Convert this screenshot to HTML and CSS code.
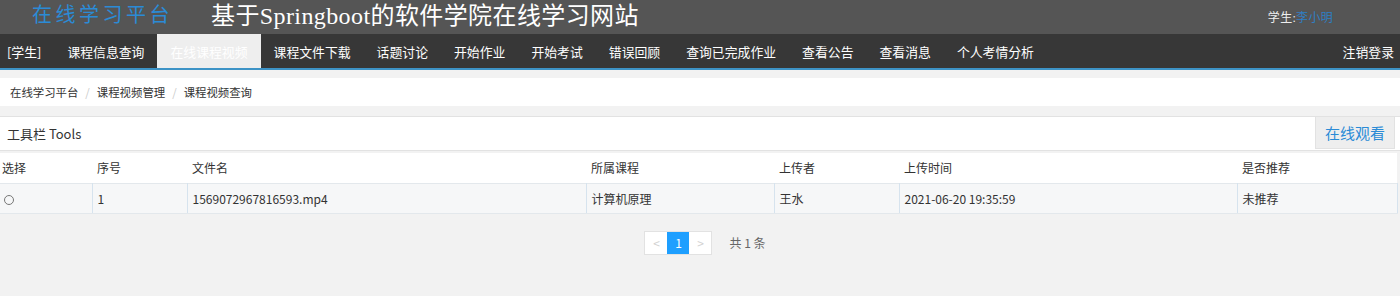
FILE: index.html
```html
<!DOCTYPE html>
<html lang="zh">
<head>
  <meta charset="UTF-8" />
  <title>在线课程视频 - 在线学习平台</title>
  <link rel="stylesheet" href="styles.css">
</head>
<body>
  <div class="header">
    <div class="logo">在线学习平台</div>
    <div class="site-title">基于Springboot的软件学院在线学习网站</div>
    <div class="user">学生:<span class="user-name">李小明</span></div>
  </div>

  <div class="nav">
    <span class="nav-role">[学生]</span>
    <a class="nav-item" href="#">课程信息查询</a>
    <a class="nav-item active" href="#">在线课程视频</a>
    <a class="nav-item" href="#">课程文件下载</a>
    <a class="nav-item" href="#">话题讨论</a>
    <a class="nav-item" href="#">开始作业</a>
    <a class="nav-item" href="#">开始考试</a>
    <a class="nav-item" href="#">错误回顾</a>
    <a class="nav-item" href="#">查询已完成作业</a>
    <a class="nav-item" href="#">查看公告</a>
    <a class="nav-item" href="#">查看消息</a>
    <a class="nav-item" href="#">个人考情分析</a>
    <a class="nav-item logout" href="#">注销登录</a>
  </div>

  <div class="breadcrumb">
    <span>在线学习平台</span><span class="sep">/</span>
    <span>课程视频管理</span><span class="sep">/</span>
    <span>课程视频查询</span>
  </div>

  <div class="toolbar">
    <span class="toolbar-title">工具栏 Tools</span>
    <button class="tool-btn">在线观看</button>
  </div>

  <table class="grid">
    <thead>
      <tr>
        <th class="c-sel">选择</th>
        <th class="c-no">序号</th>
        <th class="c-file">文件名</th>
        <th class="c-course">所属课程</th>
        <th class="c-user">上传者</th>
        <th class="c-time">上传时间</th>
        <th class="c-rec">是否推荐</th>
      </tr>
    </thead>
    <tbody>
      <tr>
        <td class="c-sel"><span class="radio"></span></td>
        <td>1</td>
        <td>1569072967816593.mp4</td>
        <td>计算机原理</td>
        <td>王水</td>
        <td>2021-06-20 19:35:59</td>
        <td>未推荐</td>
      </tr>
    </tbody>
  </table>

  <div class="pager">
    <div class="pages">
      <span class="page disabled">&lt;</span>
      <span class="page current">1</span>
      <span class="page disabled">&gt;</span>
    </div>
    <span class="count">共 1 条</span>
  </div>
</body>
</html>
```

FILE: styles.css
```css
* {
  box-sizing: border-box;
}

body {
  margin: 0;
  background: #f2f2f2;
  font-family: "Noto Sans CJK SC", "Liberation Sans", sans-serif;
  color: #333;
  font-size: 12px;
}

.header {
  height: 34px;
  background: #555;
  display: flex;
  align-items: center;
  padding-left: 32px;
}

.logo {
  font-family: "Liberation Serif", "Noto Sans CJK SC", serif;
  color: #2b8bd6;
  font-size: 20px;
  letter-spacing: 3.5px;
  margin-top: -7px;
}

.site-title {
  font-family: "Liberation Serif", "Noto Sans CJK SC", serif;
  color: #fff;
  font-size: 24px;
  letter-spacing: 0.4px;
  margin-left: 38px;
  margin-top: -8px;
}

.user {
  margin-left: auto;
  margin-right: 67px;
  color: #eee;
  font-size: 12px;
  letter-spacing: 0.3px;
  font-family: "Liberation Serif", "Noto Sans CJK SC", serif;
}

.user-name {
  color: #2f7fc4;
}

.nav {
  height: 36px;
  background: #373737;
  border-bottom: 2px solid #3d93c6;
  display: flex;
  align-items: stretch;
}

.nav-role,
.nav-item {
  color: #fff;
  font-size: 12.85px;
  display: flex;
  align-items: center;
  padding: 0 13px;
  text-decoration: none;
}

.nav-role {
  padding-left: 7px;
}

.nav-item.active {
  background: #eee;
  color: #fff;
}

.nav-item.logout {
  margin-left: auto;
  padding-right: 6px;
}

.breadcrumb {
  margin-top: 8px;
  height: 28px;
  background: #fff;
  display: flex;
  align-items: center;
  padding-left: 10px;
  color: #333;
  font-size: 11.4px;
}

.breadcrumb .sep {
  color: #ccc;
  margin: 0 7px;
}

.toolbar {
  margin-top: 10px;
  height: 35px;
  background: #fff;
  border-top: 1px solid #e2e2e2;
  border-bottom: 1px solid #e2e2e2;
  display: flex;
  align-items: center;
  padding-left: 7px;
}

.toolbar-title {
  font-size: 13px;
  color: #333;
}

.tool-btn {
  margin-left: auto;
  margin-right: 5px;
  align-self: stretch;
  width: 80px;
  background: #eee;
  border: 1px solid #e2e2e2;
  border-top: none;
  color: #2b8bd6;
  font-family: inherit;
  font-size: 15px;
  padding: 0;
  margin-bottom: 1px;
}

.grid {
  margin-top: 2px;
  width: 1397px;
  border-collapse: collapse;
  table-layout: fixed;
}

.grid th,
.grid td {
  height: 30px;
  padding: 0 5px;
  text-align: left;
  font-weight: normal;
  font-size: 12px;
  color: #333;
}

.grid thead tr {
  background: #fff;
  border-bottom: 1px solid #e3e8ec;
}

.grid tbody tr {
  background: #f6f7f8;
}

.grid td {
  border-left: 1px solid #d6e3ee;
  border-bottom: 1px solid #e3e8ec;
}

.grid td:first-child {
  border-left: none;
}

.grid td:last-child {
  border-right: 1px solid #d6e3ee;
}

.grid .c-sel { width: 92px; padding-left: 2px; }
.grid .c-no { width: 95px; }
.grid .c-file { width: 399px; }
.grid .c-course { width: 188px; }
.grid .c-user { width: 125px; }
.grid .c-time { width: 338px; }
.grid .c-rec { width: 160px; }

.radio {
  display: inline-block;
  width: 10px;
  height: 10px;
  border: 1px solid #777;
  border-radius: 50%;
  margin-left: 2px;
  vertical-align: middle;
}

.pager {
  margin-top: 17px;
  display: flex;
  justify-content: center;
  align-items: center;
  padding-left: 10px;
}

.pages {
  display: flex;
  border: 1px solid #e2e2e2;
  background: #fff;
}

.page {
  width: 22px;
  height: 22px;
  display: flex;
  align-items: center;
  justify-content: center;
  font-size: 12px;
}

.page.disabled {
  color: #d2d2d2;
}

.page.current {
  background: #1e9fff;
  color: #fff;
}

.count {
  margin-left: 17px;
  color: #666;
  font-size: 12px;
}
```
